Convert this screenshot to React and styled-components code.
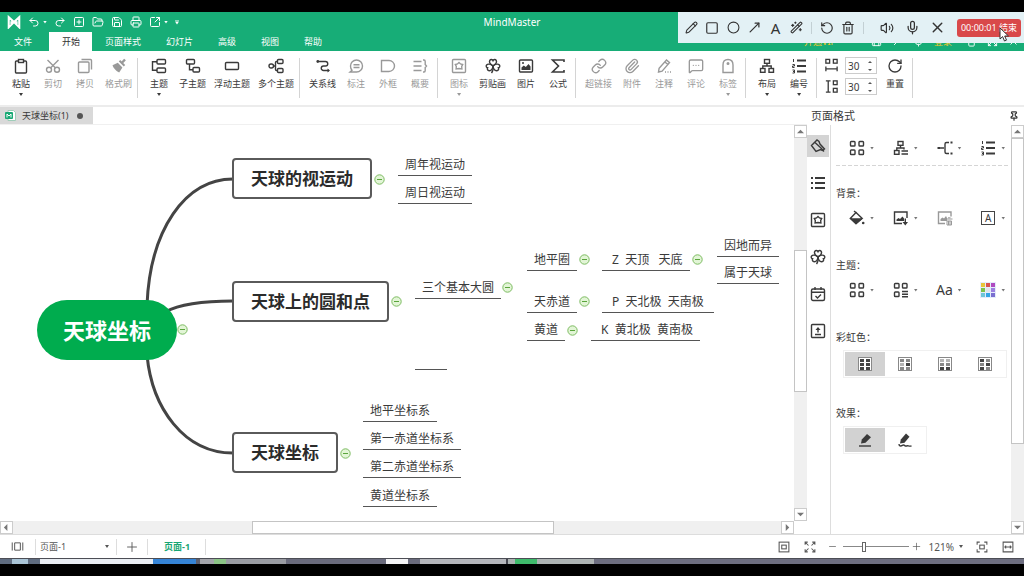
import styled, { createGlobalStyle } from 'styled-components'
import {
  Circle,
  Expand,
  FolderOpen,
  Link,
  MessageSquareMore,
  Mic,
  MoveUpRight,
  Paperclip,
  Pencil,
  Pin,
  Printer,
  Redo2,
  RotateCcw,
  RotateCw,
  Save,
  Shirt,
  Square,
  SquareArrowOutUpRight,
  SquarePlus,
  Trash2,
  Undo2,
  Volume2,
  WandSparkles,
  X,
} from 'lucide-react'

const drawings = {
  logo: <path d="M2 14V2.500L8 8l6-5.500V14L8 8zM2 14V8M14 14V8M5 12V7M11 12V7" strokeWidth="2.4" />,
  paste: (
    <>
      <rect x="2.5" y="3" width="11" height="12" rx="1" />
      <rect x="5.5" y="1.5" width="5" height="3" fill="#fff" />
    </>
  ),
  cut: (
    <>
      <circle cx="4" cy="11.8" r="2.5" />
      <circle cx="12" cy="11.8" r="2.5" />
      <path d="M2.5 2l8 8M13.5 2l-8 8" />
    </>
  ),
  copy: (
    <>
      <rect x="1.5" y="4" width="10.5" height="10.5" rx="1" />
      <path d="M4.5 1.5h9a1 1 0 0 1 1 1v9" />
    </>
  ),
  brush: (
    <>
      <path d="M14 1.5l-3.5 3.7" strokeWidth="2.4" />
      <path d="M8.5 2.8l5 5" strokeWidth="2" />
      <path d="M6.8 4.8l4.6 4.7-3.2 5C6 13.5 2.5 10.5 1.5 7.2z" fill="currentColor" stroke="none" />
    </>
  ),
  topic: (
    <>
      <rect x="6" y="1.5" width="8.5" height="4.5" rx="1" />
      <rect x="6" y="10" width="8.5" height="4.5" rx="1" />
      <path d="M6 3.8H1.5v8.5H6" />
    </>
  ),
  subtopic: (
    <>
      <rect x="1.5" y="1.5" width="8" height="4.5" rx="1" />
      <rect x="8" y="9.5" width="6.5" height="4.5" rx="1" />
      <path d="M4.5 6v5.8H8" />
    </>
  ),
  floating: <rect x="1.5" y="4.5" width="13" height="7" rx="1" />,
  multi: (
    <>
      <rect x="1" y="6" width="4.5" height="4" rx="2" />
      <rect x="9.5" y="1.5" width="5.5" height="4" rx="1" />
      <rect x="9.5" y="10.5" width="5.5" height="4" rx="1" />
      <path d="M5.5 8h2M9.5 3.5h-1a1 1 0 0 0-1 1v7a1 1 0 0 0 1 1h1" />
    </>
  ),
  relation: (
    <>
      <path d="M4 3.5h6.500a2.200 2.200 0 0 1 0 4.500h-2a2.200 2.200 0 0 0 0 4.500H14" />
      <circle cx="2.8" cy="3.5" r="1.4" fill="currentColor" stroke="none" />
      <path d="M12.5 10.5l2.5 2-2.5 2z" fill="currentColor" stroke="none" />
    </>
  ),
  callout: <path d="M2 14h6.500A6 6 0 1 0 2.500 8c0 2 .8 3.500 1.500 4.200zM5.500 6.800h6M5.500 9.500h6" />,
  boundary: <path d="M1.5 2.5h7.500c3 0 5.500 2.500 5.500 5.500s-2.500 5.500-5.500 5.500H1.500z" />,
  summary: <path d="M1.5 3.5h8M1.5 8h8M1.5 12.5h8M11 2h1q1.200 0 1.200 1.500v3L14.500 8l-1.300 1.500v3q0 1.500-1.200 1.500h-1" />,
  star: (
    <>
      <rect x="1.5" y="1.5" width="13" height="13" rx="1" />
      <path d="M8 4.500l1.500 1.400 2.200.6-1 2 .2 2.500L8 10.500l-2.900.5.2-2.500-1-2 2.200-.6z" />
    </>
  ),
  clover: (
    <>
      <path d="M8 7.800C4.800 6 4 4 4.800 2.400 5.600 1 7.300 1.200 8 2.600 8.700 1.200 10.400 1 11.200 2.400 12 4 11.200 6 8 7.800z" />
      <path d="M8 8C5.500 5.800 2.800 5.600 1.600 7c-.9 1.200-.2 2.500 1 2.800-.7 1.200 0 2.800 1.600 2.900C6 12.800 7.600 11 8 8z" />
      <path d="M8 8c2.500-2.200 5.200-2.400 6.400-1 .9 1.200.2 2.500-1 2.800.7 1.200 0 2.800-1.600 2.900C10 12.800 8.400 11 8 8z" />
      <path d="M8 8q.6 4.500-1.500 7" />
    </>
  ),
  picture: (
    <>
      <rect x="1.5" y="2" width="13" height="12" rx="1" />
      <path d="M3.5 12V9.500l2.300-2 2 1.500 2.700-3 2 2.500V12z" fill="currentColor" stroke="none" />
      <circle cx="5" cy="5" r="1" fill="currentColor" stroke="none" />
    </>
  ),
  sum: <path d="M14 4V2H2.500l6 6-6 6H14v-2" strokeWidth="1.6" />,
  note: <path d="M2.5 14l.6-3.600L10.500 2l3 2.600-7.400 8.500zM9 4l2.800 2.500M9 14h1M11.500 14h1M14 14h1" />,
  tag: (
    <>
      <path d="M3 14.500V7q0-5.500 5-5.500T13 7v7.500z" />
      <circle cx="8" cy="5.5" r=".8" fill="currentColor" />
    </>
  ),
  layout: (
    <>
      <rect x="5.5" y="1.5" width="5" height="3.8" />
      <rect x="1.5" y="10.5" width="4.5" height="3.8" />
      <rect x="10" y="10.5" width="4.5" height="3.8" />
      <path d="M8 5.300v2.700M3.800 10.500V8h8.400v2.500" />
    </>
  ),
  layoutList: (
    <>
      <rect x="5" y="1.5" width="5" height="3.8" />
      <rect x="1.5" y="10.5" width="4.5" height="3.8" />
      <path d="M7.500 5.300v2.700M3.800 10.500V8h7.200v1.500M8.500 11h6.500M8.500 14h6.500" />
    </>
  ),
  numbers: (
    <>
      <path d="M6 2.500h9M6 8h9M6 13.500h9" strokeWidth="2" />
      <path d="M2.500 1v3M1.500 6.500h2V8h-2v1.500h2M1.500 12h2v3h-2M2 13.500h1.500" strokeWidth="1" />
    </>
  ),
  list: (
    <>
      <path d="M5 3h10M5 8h10M5 13h10" strokeWidth="2" />
      <path d="M1 3h2M1 8h2M1 13h2" strokeWidth="2" />
    </>
  ),
  spaceX: (
    <>
      <rect x="2" y="1.5" width="4" height="4" />
      <rect x="10" y="1.5" width="4" height="4" />
      <path d="M2 9v5M14 9v5M2 11.500h12" />
    </>
  ),
  spaceY: (
    <>
      <rect x="10" y="2" width="4" height="4" />
      <rect x="10" y="10" width="4" height="4" />
      <path d="M2 2h5M2 14h5M4.500 2v12" />
    </>
  ),
  format: (
    <>
      <path d="M1.5 7.500L7 2l2 1.500 1 2.500 4.500 5-2 1.500-2-1-4.500 2z" />
      <path d="M5 4.500l6 5.500M11 10l3 3.500" />
    </>
  ),
  task: (
    <>
      <rect x="1.5" y="3" width="13" height="11.5" rx="1.5" />
      <path d="M1.5 6.200h13M5 1v3M11 1v3M5.500 10l2 2 3.500-3.500" />
    </>
  ),
  exportUp: (
    <>
      <rect x="1.5" y="1.5" width="13" height="13" rx="1" />
      <path d="M5 11.500h6M8 9.500V5" />
      <path d="M5.500 7L8 4l2.500 3z" fill="currentColor" stroke="none" />
    </>
  ),
  grid: (
    <>
      <rect x="1.5" y="1.5" width="4.5" height="4.5" rx=".8" />
      <rect x="10" y="1.5" width="4.5" height="4.5" rx=".8" />
      <rect x="1.5" y="10" width="4.5" height="4.5" rx=".8" />
      <rect x="10" y="10" width="4.5" height="4.5" rx=".8" />
    </>
  ),
  gridList: (
    <>
      <rect x="1.5" y="1.5" width="4.5" height="4.5" rx=".8" />
      <rect x="9.5" y="1.5" width="4.5" height="4.5" rx=".8" />
      <rect x="1.5" y="10" width="4.5" height="4.5" rx=".8" />
      <path d="M9 9.500h6M9 12.200h6M9 14.800h6" />
    </>
  ),
  connector: (
    <>
      <path d="M2.500 8H7M12 2.500H9.500Q8 2.500 8 4v8q0 1.500 1.500 1.500H12" />
      <path d="M.5 8h2.500M13.500 2.500h2M13.500 13.500h2" strokeWidth="2.2" />
    </>
  ),
  bucket: (
    <>
      <path d="M7 2.500l6 5.800-6 5.200-5.500-5.200z" />
      <path d="M2 9h10.500L7 13.500z" fill="currentColor" />
      <path d="M5 1l2.500 2" />
      <circle cx="14.2" cy="13" r="1.3" fill="currentColor" stroke="none" />
    </>
  ),
  pictureDown: (
    <>
      <path d="M9 13.500H1.500V2h12.500v6" />
      <path d="M3.500 11V9.500L5.500 8 7 9l2.500-2.500 1.500 2V11zM9.500 12h5.500l-2.700 3.500z" fill="currentColor" stroke="none" />
      <path d="M12.300 8.500v4" />
    </>
  ),
  pictureDelete: (
    <>
      <path d="M8 13.500H1.500V2h12.500v4.500" />
      <path d="M3.500 11V9l2-1.500 1.500 1 2-2.500 1 2V11z" fill="currentColor" stroke="none" />
      <path d="M9 9h6.500M10 11h4.500v4H10zM11.500 11v4M13 11v4M11 7.800h2.500" strokeWidth="1" />
    </>
  ),
  pen: (
    <>
      <path d="M4 11.500l.8-4L10 2l4 3.200-5.500 5.500z" fill="currentColor" stroke="none" />
      <path d="M2 14h12" />
    </>
  ),
  penWave: (
    <>
      <path d="M3 11.500l.8-4L9 1.500l3.500 3.200-5 6z" fill="currentColor" stroke="none" />
      <path d="M2 12c0 3 2.500 2 4 1.200s2 1.500 3.500.8 2 .5 5 0" />
    </>
  ),
  pageList: <path d="M1.500 3v10M14.500 3v10M4.500 3.500h7v9h-7z" strokeWidth="1.2" />,
  plus: <path d="M8 1.500v13M1.500 8h13" strokeWidth="1.2" />,
  minus: <path d="M2 8h12" strokeWidth="1.2" />,
  fitPage: (
    <>
      <rect x="1.5" y="1.5" width="13" height="13" />
      <rect x="5" y="5.5" width="6" height="5" />
    </>
  ),
  focus: (
    <>
      <path d="M1.500 5V1.500H5M11 1.500h3.500V5M1.500 11v3.500H5M11 14.500h3.500V11" />
      <rect x="5" y="5.5" width="6" height="5" />
    </>
  ),
  fullScreen: <path d="M1.500 5V1.500H5M11 1.500h3.500V5M1.500 11v3.500H5M11 14.500h3.500V11M2 2l4 4M14 2l-4 4M2 14l4-4M14 14l-4-4" />,
  fitWidth: <path d="M1.500 1.500h13v13h-13zM4 8h8M5.500 6.300L3.800 8l1.700 1.700M10.500 6.300L12.200 8l-1.700 1.700" />,
}

const Icon = ({ name, size = 16 }) => (
  <svg
    width={size}
    height={size}
    viewBox="0 0 16 16"
    fill="none"
    stroke="currentColor"
    strokeWidth="1.4"
    aria-hidden="true"
  >
    {drawings[name]}
  </svg>
)

const swatches = ['#e8c53a', '#d9534f', '#b04ac0', '#7cc24a', '#dfe3ea', '#9b7fe0', '#6fc6d8', '#35a5e5', '#7a6fd0']

const Palette = () => (
  <svg width="16" height="16" viewBox="0 0 16 16" aria-hidden="true">
    <rect width="16" height="16" fill="#e4ecfa" />
    {swatches.map((color, i) => (
      <rect key={i} x={1 + (i % 3) * 5} y={1 + Math.floor(i / 3) * 5} width="4" height="4" fill={color} />
    ))}
  </svg>
)

const RainbowIcon = ({ cells }) => (
  <svg width="14" height="14" viewBox="0 0 14 14" aria-hidden="true">
    <rect x=".5" y=".5" width="13" height="13" fill="#fff" stroke="#888" />
    {cells.map((color, i) => (
      <rect key={i} x={i % 2 ? 8 : 2} y={2 + Math.floor(i / 2) * 4} width="4" height="3" fill={color} />
    ))}
  </svg>
)

const ribbonGroups = [
  [
    { label: '粘贴', icon: 'paste', caret: true },
    { label: '剪切', icon: 'cut', disabled: true },
    { label: '拷贝', icon: 'copy', disabled: true },
    { label: '格式刷', icon: 'brush', disabled: true },
  ],
  [
    { label: '主题', icon: 'topic', caret: true },
    { label: '子主题', icon: 'subtopic' },
    { label: '浮动主题', icon: 'floating' },
    { label: '多个主题', icon: 'multi' },
  ],
  [
    { label: '关系线', icon: 'relation' },
    { label: '标注', icon: 'callout', disabled: true },
    { label: '外框', icon: 'boundary', disabled: true },
    { label: '概要', icon: 'summary', disabled: true },
  ],
  [
    { label: '图标', icon: 'star', disabled: true, caret: true },
    { label: '剪贴画', icon: 'clover' },
    { label: '图片', icon: 'picture' },
    { label: '公式', icon: 'sum' },
  ],
  [
    { label: '超链接', Glyph: Link, disabled: true },
    { label: '附件', Glyph: Paperclip, disabled: true },
    { label: '注释', icon: 'note', disabled: true },
    { label: '评论', Glyph: MessageSquareMore, disabled: true },
    { label: '标签', icon: 'tag', disabled: true, caret: true },
  ],
  [
    { label: '布局', icon: 'layout', caret: true },
    { label: '编号', icon: 'numbers', caret: true },
  ],
]

const tabs = ['文件', '开始', '页面样式', '幻灯片', '高级', '视图', '帮助']

const branches = [
  { text: '天球的视运动', x: 232, y: 33 },
  { text: '天球上的圆和点', x: 232, y: 156 },
  { text: '天球坐标', x: 232, y: 307 },
]

const leaves = [
  { text: '周年视运动', x: 398, y: 29 },
  { text: '周日视运动', x: 398, y: 57 },
  { text: '三个基本大圆', x: 415, y: 152 },
  { text: '地平圈', x: 527, y: 124 },
  { text: '天赤道', x: 527, y: 166 },
  { text: '黄道', x: 527, y: 194 },
  { text: ' Z  天顶   天底', x: 602, y: 124 },
  { text: ' P  天北极  天南极 ', x: 602, y: 166 },
  { text: ' K  黄北极  黄南极', x: 591, y: 194 },
  { text: '因地而异', x: 717, y: 110 },
  { text: '属于天球', x: 717, y: 137 },
  { text: '', x: 415, y: 223 },
  { text: '地平坐标系', x: 363, y: 275 },
  { text: '第一赤道坐标系', x: 363, y: 303 },
  { text: '第二赤道坐标系', x: 363, y: 331 },
  { text: '黄道坐标系', x: 363, y: 360 },
]

const toggles = [
  [182, 204],
  [379, 54],
  [396, 176],
  [345, 328],
  [507, 162],
  [584, 134],
  [697, 134],
  [584, 176],
  [572, 205],
]

const dark = '#444'
const mid = '#888'
const light = '#b5b5b5'
const rainbows = [
  [dark, dark, dark, dark, dark, dark],
  [mid, mid, light, dark, mid, mid],
  [light, light, mid, mid, dark, dark],
  [dark, mid, mid, dark, dark, mid],
]

// [width, colour] of the strips along the task bar
const taskItems = [
  [12, '#5f6c80'],
  [16, '#a9c4d6'],
  [12, '#5f6c80'],
  [113, '#e9edf2'],
  [43, '#3584d6'],
  [4, '#5d5f6e'],
  [14, '#a3a5ab'],
  [12, '#8cc487'],
  [60, '#9a9ca3'],
  [100, '#6a6b7d'],
  [22, '#f4f4f6'],
  [12, '#6a6b7d'],
  [86, '#b4b6bb'],
  [2, '#45464f'],
  [7, '#adb3b3'],
  [22, '#3fbb6c'],
  [57, '#adb3b3'],
]

const TitleBar = () => (
  <TitleRow>
    <QuickAccess>
      <Icon name="logo" size={14} />
      <QuickButton aria-label="撤销">
        <Undo2 size={12} strokeWidth={2} />
        <Caret />
      </QuickButton>
      <QuickButton aria-label="重做">
        <Redo2 size={12} strokeWidth={2} />
      </QuickButton>
      <QuickButton aria-label="新建">
        <SquarePlus size={12} strokeWidth={2} />
      </QuickButton>
      <QuickButton aria-label="打开">
        <FolderOpen size={12} strokeWidth={2} />
      </QuickButton>
      <QuickButton aria-label="保存">
        <Save size={12} strokeWidth={2} />
      </QuickButton>
      <QuickButton aria-label="打印">
        <Printer size={12} strokeWidth={2} />
      </QuickButton>
      <QuickButton aria-label="导出">
        <SquareArrowOutUpRight size={12} strokeWidth={2} />
        <Caret />
      </QuickButton>
      <QuickButton aria-label="更多">
        <Caret $topped />
      </QuickButton>
    </QuickAccess>
    <AppTitle>MindMaster</AppTitle>
  </TitleRow>
)

const Recorder = () => (
  <RecorderBar>
    <Tool aria-label="画笔"><Pencil size={13} strokeWidth={2} /></Tool>
    <Tool aria-label="矩形"><Square size={14} strokeWidth={2} /></Tool>
    <Tool aria-label="椭圆"><Circle size={13} strokeWidth={2} /></Tool>
    <Tool aria-label="箭头"><MoveUpRight size={15} strokeWidth={2} /></Tool>
    <Tool>A</Tool>
    <Tool aria-label="魔棒"><WandSparkles size={13} strokeWidth={2} /></Tool>
    <ToolDivider />
    <Tool aria-label="撤销"><RotateCcw size={14} strokeWidth={2} /></Tool>
    <Tool aria-label="删除"><Trash2 size={14} strokeWidth={2} /></Tool>
    <ToolDivider $wide />
    <Tool $wide aria-label="声音"><Volume2 size={14} strokeWidth={2} /></Tool>
    <Tool $wide aria-label="麦克风"><Mic size={15} strokeWidth={2} /></Tool>
    <Tool $wide aria-label="关闭"><X size={17} strokeWidth={2} /></Tool>
    <StopButton>00:00:01 结束</StopButton>
    <Pointer width="11" height="15" viewBox="0 0 11 15" aria-hidden="true">
      <path d="M1 1v11l2.600-2.400L5.500 14l2-.9-1.800-4.100H9.500z" fill="#fff" stroke="#333" />
    </Pointer>
  </RecorderBar>
)

const Ribbon = () => (
  <RibbonBar>
    {ribbonGroups.map((group, i) => (
      <RibbonGroup key={i}>
        {group.map(({ label, icon, Glyph, disabled, caret }) => (
          <RibbonButton key={label} disabled={disabled}>
            {Glyph ? <Glyph size={16} strokeWidth={2} /> : <Icon name={icon} />}
            <span>{label}</span>
            {caret && <Caret />}
          </RibbonButton>
        ))}
      </RibbonGroup>
    ))}
    <RibbonGroup>
      <Spinners>
        {['spaceX', 'spaceY'].map(name => (
          <SpinRow key={name}>
            <Icon name={name} size={15} />
            <SpinBox>
              <input aria-label={name === 'spaceX' ? '水平间距' : '垂直间距'} defaultValue="30" />
              <svg width="4" height="11" viewBox="0 0 4 11" aria-hidden="true">
                <path d="M0 3l2-2 2 2zM0 9l2 2 2-2z" fill="#555" />
              </svg>
            </SpinBox>
          </SpinRow>
        ))}
      </Spinners>
      <RibbonButton>
        <RotateCw size={16} strokeWidth={2} />
        <span>重置</span>
      </RibbonButton>
    </RibbonGroup>
  </RibbonBar>
)

const MindMap = () => (
  <Canvas>
    <Edges width="240" height="340" viewBox="0 0 240 340">
      <path d="M147 180C150 105 185 54 233 54" />
      <path d="M165 187C180 179 205 176 233 176" />
      <path d="M147 230C152 283 184 328 233 328" />
    </Edges>
    <RootNode $x={37} $y={175}>天球坐标</RootNode>
    {branches.map(({ text, x, y }) => (
      <BranchNode key={text} $x={x} $y={y}>{text}</BranchNode>
    ))}
    {leaves.map(({ text, x, y }) => (
      <LeafNode key={text} $x={x} $y={y}>{text}</LeafNode>
    ))}
    {toggles.map(([x, y]) => (
      <Toggle key={`${x}-${y}`} $x={x - 5} $y={y - 5} aria-label="折叠">
        <svg width="11" height="11" viewBox="0 0 11 11">
          <circle cx="5.5" cy="5.5" r="4.7" fill="#e2f5d6" stroke="#7dbb62" />
          <path d="M3 5.500h5" stroke="#5aa53c" />
        </svg>
      </Toggle>
    ))}
  </Canvas>
)

const arrows = { up: 'M0 6l4-4 4 4z', down: 'M0 2l4 4 4-4z', left: 'M5 0v8L1 4z', right: 'M2 0v8l4-4z' }

const ScrollButton = ({ dir }) => (
  <ScrollArrow aria-label={dir}>
    <svg width="7" height="7" viewBox="0 0 8 8">
      <path d={arrows[dir]} fill="#777" />
    </svg>
  </ScrollArrow>
)

const ScrollBar = ({ horizontal, before, size, after, gutter }) => (
  <Scroll $horizontal={horizontal} $gutter={gutter}>
    <ScrollButton dir={horizontal ? 'left' : 'up'} />
    <ScrollSpace $grow={before} />
    <ScrollThumb $grow={size} />
    <ScrollSpace $grow={after} />
    <ScrollButton dir={horizontal ? 'right' : 'down'} />
  </Scroll>
)

const Choice = ({ children, label, caret = true, disabled }) => (
  <ChoiceButton aria-label={label} disabled={disabled}>
    <ChoiceIcon>{children}</ChoiceIcon>
    {caret && <Caret $soft />}
  </ChoiceButton>
)

const FormatPanel = () => (
  <Side>
    <SideHeader>
      <SideTitle>页面格式</SideTitle>
      <Pin size={10} strokeWidth={3} />
    </SideHeader>
    <SideBody>
      <Rail>
        {['format', 'list', 'star', 'clover', 'task', 'exportUp'].map((name, i) => (
          <RailButton key={name} $active={i === 0} aria-label={name}>
            <Icon name={name} />
          </RailButton>
        ))}
      </Rail>
      <Panel>
        <ChoiceRow $ruled>
          <Choice label="布局"><Icon name="grid" /></Choice>
          <Choice label="结构"><Icon name="layoutList" /></Choice>
          <Choice label="连线"><Icon name="connector" /></Choice>
          <Choice label="编号"><Icon name="numbers" /></Choice>
        </ChoiceRow>
        <SectionTitle $first>背景：</SectionTitle>
        <ChoiceRow>
          <Choice label="填充"><Icon name="bucket" /></Choice>
          <Choice label="插入背景"><Icon name="pictureDown" /></Choice>
          <Choice label="删除背景" caret={false} disabled><Icon name="pictureDelete" /></Choice>
          <Choice label="水印"><BoxedLetter>A</BoxedLetter></Choice>
        </ChoiceRow>
        <SectionTitle>主题：</SectionTitle>
        <ChoiceRow>
          <Choice label="主题"><Icon name="grid" /></Choice>
          <Choice label="主题样式"><Icon name="gridList" /></Choice>
          <Choice><FontSample>Aa</FontSample></Choice>
          <Choice label="颜色"><Palette /></Choice>
        </ChoiceRow>
        <SectionTitle>彩虹色：</SectionTitle>
        <Segments>
          {rainbows.map((cells, i) => (
            <Segment key={i} $active={i === 0} aria-label={`彩虹色 ${i + 1}`}>
              <RainbowIcon cells={cells} />
            </Segment>
          ))}
        </Segments>
        <SectionTitle>效果：</SectionTitle>
        <Segments>
          <Segment $active aria-label="直线"><Icon name="pen" /></Segment>
          <Segment aria-label="手绘"><Icon name="penWave" /></Segment>
        </Segments>
      </Panel>
      <ScrollBar before={0} size={306} after={78} />
    </SideBody>
  </Side>
)

const StatusBar = () => (
  <Status>
    <StatusButton $width={35} aria-label="页面列表"><Icon name="pageList" size={13} /></StatusButton>
    <PageSelect>
      <select aria-label="页面">
        <option>页面-1</option>
      </select>
      <Caret />
    </PageSelect>
    <StatusButton $width={31} $ruled aria-label="添加页面"><Icon name="plus" size={12} /></StatusButton>
    <PageTab>页面-1</PageTab>
    <Zoom>
      <StatusButton $width={26} aria-label="整页"><Icon name="fitPage" size={12} /></StatusButton>
      <StatusButton $width={26} aria-label="全屏"><Icon name="fullScreen" size={12} /></StatusButton>
      <StatusButton $width={20} aria-label="缩小"><Icon name="minus" size={9} /></StatusButton>
      <Range type="range" min="0" max="100" defaultValue="31" aria-label="缩放" />
      <StatusButton $width={16} aria-label="放大"><Icon name="plus" size={9} /></StatusButton>
      <Percent>
        121% <Caret />
      </Percent>
      <StatusButton $width={26} aria-label="居中"><Icon name="focus" size={12} /></StatusButton>
      <StatusButton $width={26} aria-label="适合宽度"><Icon name="fitWidth" size={12} /></StatusButton>
    </Zoom>
  </Status>
)

const App = () => (
  <Screen>
    <GlobalStyle />
    <Header>
      <TitleBar />
      <TabRow>
        {tabs.map((tab, i) => (
          <Tab key={tab} $active={i === 1} $first={i === 0}>{tab}</Tab>
        ))}
        <Account>
          <Vip href="#vip">开通VIP</Vip>
          <Save size={11} />
          <MoveUpRight size={11} />
          <Mic size={11} />
          <Login href="#login">登录</Login>
          <Shirt size={11} />
          <Expand size={11} />
          <X size={11} />
        </Account>
      </TabRow>
      <Recorder />
    </Header>
    <Ribbon />
    <Main>
      <Workspace>
        <DocTabs>
          <DocTab>
            <svg width="11" height="11" viewBox="0 0 11 11" aria-hidden="true">
              <path d="M3 .5h5.500l2 2v8H3z" fill="#fff" stroke="#9fcdb9" />
              <rect y="2" width="8" height="7" rx="1" fill="#19a974" />
              <path d="M2 7.500V4l2 2 2-2v3.500" fill="none" stroke="#fff" />
            </svg>
            天球坐标(1)
            <Dot />
          </DocTab>
        </DocTabs>
        <CanvasRow>
          <MindMap />
          <ScrollBar before={113} size={141} after={117} />
        </CanvasRow>
        <ScrollBar horizontal gutter before={240} size={300} after={228} />
      </Workspace>
      <FormatPanel />
    </Main>
    <StatusBar />
    <TaskBar>
      {taskItems.map(([width, color], i) => (
        <TaskItem key={i} $width={width} $color={color} />
      ))}
    </TaskBar>
  </Screen>
)

export default App

const GlobalStyle = createGlobalStyle`
  * {
    box-sizing: border-box;
  }
  body {
    margin: 0;
    background: #000;
    color: #3a3a3a;
    font: 9px/14px 'Noto Sans', 'Noto Sans CJK SC', sans-serif;
  }
  button, input, select {
    margin: 0;
    padding: 0;
    border: 0;
    background: none;
    color: inherit;
    font: inherit;
  }
  svg {
    display: block;
    flex: none;
  }
  a {
    text-decoration: none;
  }
`

const Screen = styled.div`
  display: flex;
  flex-direction: column;
  min-height: 100vh;
  padding: 12px 0;
  background: #000;
`

const Header = styled.header`
  position: relative;
  background: #17ad77;
  color: #fff;
`

const TitleRow = styled.div`
  display: grid;
  grid-template-columns: 1fr auto 1fr;
  align-items: center;
  height: 20px;
`

const QuickAccess = styled.div`
  display: flex;
  align-items: center;
  gap: 7px;
  padding-left: 7px;
`

const QuickButton = styled.button`
  display: flex;
  align-items: center;
  gap: 3px;
`

const Caret = styled.i`
  flex: none;
  width: 4px;
  height: ${p => (p.$topped ? 5 : 3)}px;
  background: currentColor;
  opacity: ${p => (p.$soft ? 0.7 : 1)};
  clip-path: ${p =>
    p.$topped
      ? 'polygon(0 0, 100% 0, 100% 20%, 0 20%, 0 40%, 100% 40%, 50% 100%, 0 40%)'
      : 'polygon(0 0, 100% 0, 50% 100%)'};
`

const AppTitle = styled.div`
  font-size: 10px;
`

const TabRow = styled.nav`
  display: flex;
  height: 19px;
`

const Tab = styled.button`
  padding: 0 12px 0 13px;
  margin: ${p => (p.$first ? '0 5px 0 1px' : '0')};
  background: ${p => (p.$active ? '#fff' : 'transparent')};
  color: ${p => (p.$active ? '#333' : '#fff')};
`

const Account = styled.div`
  display: flex;
  align-items: center;
  gap: 10px;
  margin-left: auto;
  padding-right: 5px;
`

const Vip = styled.a`
  margin-right: 25px;
  color: #f3c82b;
`

const Login = styled.a`
  margin-right: 4px;
  color: #f3c82b;
`

const RecorderBar = styled.div`
  position: absolute;
  top: 0;
  right: 0;
  display: flex;
  align-items: center;
  height: 31px;
  padding: 0 3px;
  background: #e3f1f5;
  color: #333;
`

const Tool = styled.button`
  display: flex;
  justify-content: center;
  align-items: center;
  width: ${p => (p.$wide ? 25 : 21)}px;
  font-size: 15px;
`

const ToolDivider = styled.span`
  width: 1px;
  height: 12px;
  margin: 0 ${p => (p.$wide ? 11 : 5)}px 0 4px;
  background: #c3d0d4;
`

const StopButton = styled.button`
  height: 18px;
  margin-left: 7px;
  padding: 0 4px;
  border-radius: 3px;
  background: #d9494a;
  color: #fff;
`

const Pointer = styled.svg`
  position: absolute;
  right: 14px;
  top: 15px;
`

const RibbonBar = styled.div`
  display: flex;
  padding-left: 1px;
  border-bottom: 2px solid #ececec;
  background: #fff;
`

const RibbonGroup = styled.div`
  display: flex;
  height: 54px;
  margin-right: 1px;
  padding: 0 2px 0 4px;
  background: linear-gradient(#d4d4d4, #d4d4d4) right 7px / 1px 40px no-repeat;
`

const RibbonButton = styled.button`
  display: flex;
  flex-direction: column;
  align-items: center;
  min-width: 32px;
  padding: 7px 4px 0;
  color: ${p => (p.disabled ? '#999' : '#3a3a3a')};
  white-space: nowrap;

  span {
    margin: 3px 0 2px;
  }
`

const Spinners = styled.div`
  display: flex;
  flex-direction: column;
  gap: 4px;
  padding: 6px 2px 0;
`

const SpinRow = styled.div`
  display: flex;
  align-items: center;
  gap: 6px;
`

const SpinBox = styled.label`
  display: flex;
  align-items: center;
  width: 32px;
  height: 17px;
  padding: 0 4px 0 2px;
  border: 1px solid #ccc;
  font-size: 10px;

  input {
    flex: 1;
    min-width: 0;
    outline: 0;
  }
`

const Main = styled.main`
  display: flex;
  flex: 1;
  background: #fff;
`

const Workspace = styled.section`
  display: flex;
  flex: 1;
  flex-direction: column;
  min-width: 0;
`

const DocTabs = styled.div`
  display: flex;
  border-bottom: 1px solid #f0f0f0;
`

const DocTab = styled.button`
  display: flex;
  align-items: center;
  gap: 6px;
  height: 17px;
  padding: 0 10px 0 5px;
  background: #d9d9d9;
`

const Dot = styled.i`
  width: 6px;
  height: 6px;
  margin-left: 2px;
  border-radius: 50%;
  background: #555;
`

const CanvasRow = styled.div`
  display: flex;
  flex: 1;
`

const Canvas = styled.div`
  position: relative;
  flex: 1;
  min-width: 0;
  overflow: hidden;
`

const Edges = styled.svg`
  position: absolute;
  left: 0;
  top: 0;
  fill: none;
  stroke: #444;
  stroke-width: 3px;
`

const MapItem = styled.div`
  position: absolute;
  left: ${p => p.$x}px;
  top: ${p => p.$y}px;
  white-space: pre;
`

const RootNode = styled(MapItem)`
  padding: 0 26px;
  border-radius: 30px;
  background: #00ac4e;
  color: #fff;
  font-size: 22px;
  font-weight: 700;
  line-height: 60px;
`

const BranchNode = styled(MapItem)`
  padding: 0 17px;
  border: 2px solid #5a5a5a;
  border-radius: 4px;
  background: #fff;
  color: #2b2b2b;
  font-size: 17px;
  font-weight: 700;
  line-height: 37px;
`

const LeafNode = styled(MapItem)`
  min-width: 32px;
  height: 22px;
  padding: 0 7px;
  border-bottom: 1px solid #555;
  font-size: 12px;
  line-height: 21px;
`

const Toggle = styled(MapItem).attrs({ as: 'button' })``

const Scroll = styled.div`
  display: flex;
  flex: none;
  flex-direction: ${p => (p.$horizontal ? 'row' : 'column')};
  ${p => (p.$horizontal ? 'height' : 'width')}: 13px;
  margin-right: ${p => (p.$gutter ? 13 : 0)}px;
  background: #f0f0f0;
`

const ScrollArrow = styled.button`
  display: flex;
  flex: none;
  justify-content: center;
  align-items: center;
  width: 13px;
  height: 13px;
  border: 1px solid #ccc;
  background: #fff;
`

const ScrollSpace = styled.div`
  flex: ${p => p.$grow} 0 0;
`

const ScrollThumb = styled.div`
  flex: ${p => p.$grow} 0 0;
  border: 1px solid #c4c4c4;
  background: #fff;
`

const Side = styled.aside`
  display: flex;
  flex: none;
  flex-direction: column;
  width: 217px;
`

const SideHeader = styled.div`
  display: flex;
  align-items: center;
  justify-content: space-between;
  height: 18px;
  padding: 0 5px 0 4px;
`

const SideTitle = styled.h2`
  margin: 0;
  font-size: 11px;
  font-weight: 400;
`

const SideBody = styled.div`
  display: flex;
  flex: 1;
`

const Rail = styled.div`
  display: flex;
  flex-direction: column;
  gap: 15px;
  width: 24px;
  padding: 10px 1px 0 0;
  border-right: 1px solid #ddd;
`

const RailButton = styled.button`
  display: flex;
  justify-content: center;
  align-items: center;
  height: 22px;
  background: ${p => (p.$active ? '#d4d4d4' : 'transparent')};
`

const Panel = styled.div`
  flex: 1;
  min-width: 0;
  padding: 11px 2px 0 5px;
`

const ChoiceRow = styled.div`
  display: grid;
  grid-template-columns: repeat(4, 1fr);
  margin-right: -15px;
  padding: 0 0 ${p => (p.$ruled ? 6 : 0)}px 13px;
  ${p =>
    p.$ruled &&
    'background: repeating-linear-gradient(90deg, #d5d5d5 0 4px, transparent 4px 6px) left bottom / 174px 1px no-repeat;'}
`

const ChoiceButton = styled.button`
  display: flex;
  align-items: center;
  gap: 5px;
  height: 24px;
  color: ${p => (p.disabled ? '#999' : '#3a3a3a')};
`

const ChoiceIcon = styled.span`
  display: flex;
  justify-content: center;
  width: 16px;
`

const BoxedLetter = styled.span`
  width: 14px;
  height: 14px;
  border: 1px solid #444;
  font-size: 10px;
  line-height: 12px;
`

const FontSample = styled.span`
  font-size: 14px;
`

const SectionTitle = styled.h3`
  margin: ${p => (p.$first ? 19 : 27)}px 0 5px;
  font-size: 10px;
  font-weight: 400;
  line-height: 16px;
`

const Segments = styled.div`
  display: inline-flex;
  margin-left: 7px;
  padding: 1px;
  border: 1px solid #f0f0f0;
  vertical-align: top;
`

const Segment = styled.button`
  display: flex;
  justify-content: center;
  align-items: center;
  width: 40px;
  height: 24px;
  background: ${p => (p.$active ? '#d2d2d2' : 'transparent')};
`

const Status = styled.footer`
  display: flex;
  align-items: center;
  height: 24px;
  border-top: 1px solid #ddd;
  background: #fff;
  color: #555;
`

const StatusButton = styled.button`
  display: flex;
  justify-content: center;
  align-items: center;
  width: ${p => p.$width}px;
  height: 16px;
  border-right: ${p => (p.$ruled ? '1px solid #ddd' : '0')};
`

const PageSelect = styled.label`
  display: flex;
  align-items: center;
  width: 82px;
  height: 16px;
  padding: 0 7px 0 4px;
  border: solid #ddd;
  border-width: 0 1px;

  select {
    flex: 1;
    appearance: none;
    outline: 0;
  }
`

const PageTab = styled.button`
  height: 16px;
  padding: 0 15px 0 16px;
  border-right: 1px solid #ddd;
  color: #17a673;
  font-weight: 700;
`

const Zoom = styled.div`
  display: flex;
  align-items: center;
  margin-left: auto;
  padding-right: 3px;
`

const Range = styled.input`
  appearance: none;
  width: 66px;
  height: 12px;
  background: linear-gradient(#888, #888) center / 100% 1px no-repeat;

  &::-webkit-slider-thumb {
    appearance: none;
    width: 4px;
    height: 10px;
    border: 1px solid #666;
    background: #fff;
  }
`

const Percent = styled.span`
  display: flex;
  align-items: center;
  gap: 5px;
  padding: 0 6px 0 4px;
  font-size: 10px;
`

const TaskBar = styled.div`
  display: flex;
  height: 6px;
  border-top: 1px solid #4c4d55;
  background: #6d6e80;
`

const TaskItem = styled.div`
  width: ${p => p.$width}px;
  background: ${p => p.$color};
`
